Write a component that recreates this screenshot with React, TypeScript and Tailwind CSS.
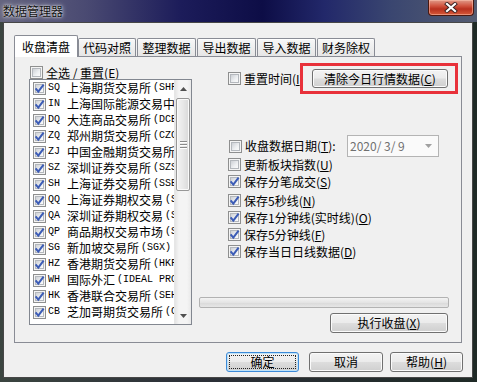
import React from "react";

const items: [string, string, string][] = [
  ["SQ", "上海期货交易所", "(SHFE)"],
  ["IN", "上海国际能源交易中心", "(INE)"],
  ["DQ", "大连商品交易所", "(DCE)"],
  ["ZQ", "郑州期货交易所", "(CZCE)"],
  ["ZJ", "中国金融期货交易所", "(CFFEX)"],
  ["SZ", "深圳证券交易所", "(SZSE)"],
  ["SH", "上海证券交易所", "(SSE)"],
  ["QQ", "上海证券期权交易", "(SSE)"],
  ["QA", "深圳证券期权交易", "(SZSE)"],
  ["QP", "商品期权交易市场", "(SHFE)"],
  ["SG", "新加坡交易所", "(SGX)"],
  ["HZ", "香港期货交易所", "(HKFE)"],
  ["WH", "国际外汇", "(IDEAL PRO)"],
  ["HK", "香港联合交易所", "(SEHK)"],
  ["CB", "芝加哥期货交易所", "(CBOT)"],
];

function Check({ on }: { on?: boolean }) {
  return (
    <span className="relative inline-block w-[13px] h-[13px] shrink-0 border border-[#8e8f8f] bg-[#f4f4f4]">
      <span className="absolute inset-[1px] border border-[#b4b8bd] bg-[linear-gradient(135deg,#cdd0d5,#eef0f2_60%,#fbfbfb)]" />
      {on && (
        <svg className="absolute left-0 top-0" width="11" height="11" viewBox="0 0 11 11">
          <path d="M1.6 5.4 L4.3 8.6 L9.6 1.6" fill="none" stroke="#3c5cb6" strokeWidth="2" />
        </svg>
      )}
    </span>
  );
}

function Key({ k }: { k: string }) {
  return (
    <>
      (<span className="underline underline-offset-1">{k}</span>)
    </>
  );
}

function Btn({
  children,
  className = "",
  focused = false,
}: {
  children: React.ReactNode;
  className?: string;
  focused?: boolean;
}) {
  return (
    <div
      className={`relative flex items-center justify-center shrink-0 rounded-[3px] border leading-[14px] ${
        focused
          ? "border-[#3c8ad8] shadow-[inset_0_0_0_1px_#bfe2f8]"
          : "border-[#707070] shadow-[inset_0_0_0_1px_#fbfbfb]"
      } bg-[linear-gradient(#f3f3f3_0%,#ebebeb_48%,#dddddd_52%,#cfcfcf_100%)] ${className}`}
    >
      {focused && <span className="absolute inset-[2px] border border-dotted border-[#222]" />}
      <span className="relative">{children}</span>
    </div>
  );
}

function Row({ on, children, className = "" }: { on?: boolean; children: React.ReactNode; className?: string }) {
  return (
    <div className={`flex items-center h-[17px] gap-[3px] whitespace-nowrap ${className}`}>
      <Check on={on} />
      <span className="leading-[14px]">{children}</span>
    </div>
  );
}

export default function App() {
  const tabs = [
    { t: "代码对照", w: "w-[58px]", ml: "ml-0" },
    { t: "整理数据", w: "w-[59px]", ml: "ml-[1px]" },
    { t: "导出数据", w: "w-[59px]", ml: "ml-[1px]" },
    { t: "导入数据", w: "w-[59px]", ml: "ml-[1px]" },
    { t: "财务除权", w: "w-[58px]", ml: "ml-[1px]" },
  ];
  return (
    <div className="relative w-[477px] h-[382px] overflow-hidden flex flex-col bg-[linear-gradient(90deg,#3b4540_0%,#2c3038_40%,#1f2a26_100%)] font-['Noto_Sans_CJK_SC',sans-serif] text-[12px] text-black">
      {/* title bar */}
      <div className="h-[22px] shrink-0 flex items-start justify-between bg-[linear-gradient(90deg,#65657f_0%,#4a4a72_18%,#1c1c5a_38%,#0d0d46_55%,#22286a_68%,#3a4670_82%,#545c72_100%)]">
        <span className="ml-[3px] mt-[3px] leading-[16px] text-[12px] text-[#111] [text-shadow:0_0_5px_rgba(255,255,255,0.95),0_0_2px_rgba(255,255,255,0.9)]">
          数据管理器
        </span>
        <div className="mr-[3px] w-[46px] h-[16px] flex items-center justify-center rounded-b-[4px] border border-t-0 border-[#4a1810] bg-[linear-gradient(#e09a88_0%,#d0523e_40%,#b8301e_60%,#d65a3a_100%)] shadow-[inset_0_0_0_1px_rgba(255,200,180,0.5)]">
          <svg width="14" height="11" viewBox="0 0 14 11">
            <path d="M3 2 L11 9 M11 2 L3 9" stroke="#3a2020" strokeWidth="4" strokeLinecap="square" />
            <path d="M3 2 L11 9 M11 2 L3 9" stroke="#ffffff" strokeWidth="2.2" strokeLinecap="square" />
          </svg>
        </div>
      </div>

      {/* client area */}
      <div className="ml-[3px] mr-[4px] mb-[4px] flex-1 flex flex-col border border-[#474747] bg-[#f0f0f0] pl-[10px] pt-[12px]">
        {/* tabs */}
        <div className="flex items-end h-[22px] relative z-10">
          <div className="w-[64px] h-[22px] flex items-center justify-center rounded-t-[2px] border border-b-0 border-[#898c95] bg-white leading-[14px]">
            收盘清盘
          </div>
          {tabs.map((tb) => (
            <div
              key={tb.t}
              className={`${tb.w} ${tb.ml} h-[18px] mb-[1px] flex items-center justify-center rounded-t-[2px] border border-b-0 border-[#898c95] bg-[linear-gradient(#f7f7f7,#e6e6e6)] shadow-[inset_0_1px_0_#ffffff] leading-[14px]`}
            >
              {tb.t}
            </div>
          ))}
        </div>

        {/* panel */}
        <div className="-mt-[1px] w-[448px] h-[287px] border border-[#898c95] bg-[#f0f0f0] flex">
          {/* left column */}
          <div className="ml-[14px] pt-[9px] w-[163px] flex flex-col">
            <div className="h-[13px] flex items-center pl-[1px] gap-[3px] whitespace-nowrap">
              <Check />
              <span className="leading-[14px]">
                全选 / 重置<Key k="E" />
              </span>
            </div>
            <div className="h-[246px] border border-[#828790] bg-white flex">
              <div className="flex-1 min-w-0 overflow-hidden">
                {items.map(([c, cn, en]) => (
                  <div key={c} className="h-[16px] flex items-center pl-[3px] whitespace-nowrap">
                    <Check on />
                    <span className="ml-[2px] w-[19px] shrink-0 font-['Liberation_Mono',monospace] text-[10px] leading-[14px]">
                      {c}
                    </span>
                    <span className="leading-[14px]">{cn}</span>
                    <span className="ml-[2px] font-['Liberation_Mono',monospace] text-[10px] leading-[14px]">{en}</span>
                  </div>
                ))}
              </div>
              {/* scrollbar */}
              <div className="w-[17px] shrink-0 flex flex-col border-l border-[#e6e6e6] bg-[linear-gradient(90deg,#e4e4e4,#f4f4f4_25%,#f4f4f4_75%,#e9e9e9)]">
                <div className="h-[17px] flex items-center justify-center">
                  <svg width="7" height="4" viewBox="0 0 7 4">
                    <path d="M0 4 L3.5 0 L7 4 Z" fill="#505050" />
                  </svg>
                </div>
                <div className="flex-1 flex flex-col">
                  <div className="mt-[1px] mx-[1px] h-[93px] rounded-[2px] border border-[#979797] bg-[linear-gradient(90deg,#f4f4f4,#e8e8e8_50%,#d9d9d9)] shadow-[inset_0_0_0_1px_#fafafa] flex flex-col items-center justify-center gap-[2px]">
                    <span className="w-[7px] h-[1px] bg-[#8a8a8a] shadow-[0_1px_0_#fff]" />
                    <span className="w-[7px] h-[1px] bg-[#8a8a8a] shadow-[0_1px_0_#fff]" />
                    <span className="w-[7px] h-[1px] bg-[#8a8a8a] shadow-[0_1px_0_#fff]" />
                  </div>
                </div>
                <div className="h-[17px] flex items-center justify-center">
                  <svg width="7" height="4" viewBox="0 0 7 4">
                    <path d="M0 0 L7 0 L3.5 4 Z" fill="#505050" />
                  </svg>
                </div>
              </div>
            </div>
          </div>

          {/* right container */}
          <div className="ml-[7px] w-[250px] pt-[12px] flex flex-col">
            <div className="flex items-center h-[19px] pl-[29px]">
              <div className="w-[84px] flex items-center gap-[3px] whitespace-nowrap">
                <Check />
                <span className="leading-[14px]">
                  重置时间<Key k="I" />
                </span>
              </div>
              <Btn className="w-[136px] h-[19px] z-10">
                清除今日行情数据<Key k="C" />
              </Btn>
            </div>

            <div className="mt-[47px] h-[22px] flex items-center pl-[30px]">
              <div className="w-[118px] flex items-center gap-[3px] whitespace-nowrap">
                <Check />
                <span className="leading-[14px]">
                  收盘数据日期<Key k="T" />:
                </span>
              </div>
              <div className="w-[92px] h-[22px] border border-[#b4b4b4] bg-[#fafafa] flex items-center justify-between pl-[2px] pr-[6px]">
                <span className="whitespace-pre text-[#707070] leading-[14px]">2020/ 3/ 9</span>
                <svg width="7" height="4" viewBox="0 0 7 4">
                  <path d="M0 0 L7 0 L3.5 4 Z" fill="#a0a0a0" />
                </svg>
              </div>
            </div>

            <div className="-mt-[1px] pl-[29px] flex flex-col">
              <Row>
                更新板块指数<Key k="U" />
              </Row>
              <Row on>
                保存分笔成交<Key k="S" />
              </Row>
              <Row on className="mt-[2px]">
                保存5秒线<Key k="N" />
              </Row>
              <Row on>
                保存1分钟线(实时线)<Key k="O" />
              </Row>
              <Row on>
                保存5分钟线<Key k="F" />
              </Row>
              <Row on>
                保存当日日线数据<Key k="D" />
              </Row>
            </div>

            <div className="mt-[37px] h-[11px] w-[250px] rounded-[2px] border border-[#b2b2b2] bg-[linear-gradient(#f3f3f3,#e4e4e4_50%,#dadada_55%,#e6e6e6)]" />

            <Btn className="mt-[5px] self-end mr-[1px] w-[118px] h-[20px]">
              执行收盘<Key k="X" />
            </Btn>
          </div>
        </div>

        {/* bottom buttons */}
        <div className="mt-[9px] w-[449px] flex justify-end">
          <Btn focused className="w-[73px] h-[20px] mr-[10px]">
            确定
          </Btn>
          <Btn className="w-[74px] h-[20px] mr-[7px]">取消</Btn>
          <Btn className="w-[73px] h-[20px]">
            帮助<Key k="H" />
          </Btn>
        </div>
      </div>

      {/* annotation highlight */}
      <div className="absolute left-[300px] top-[63px] w-[158px] h-[31px] border-[3px] border-[#e8313a] pointer-events-none" />
    </div>
  );
}
